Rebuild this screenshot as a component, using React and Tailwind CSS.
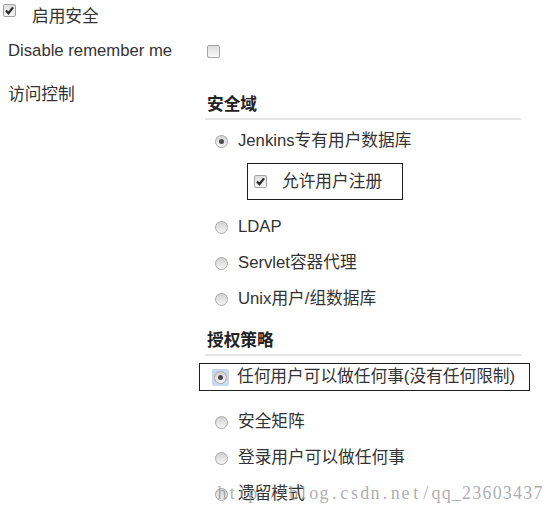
import React from 'react'

const font = "font-['Liberation_Sans','Noto_Sans_CJK_SC',sans-serif]"

function Checkbox({ checked }) {
    return (
        <span className="flex h-[13px] w-[13px] shrink-0 items-center justify-center rounded-[2px] border border-[#a3a3a3] bg-linear-to-b from-[#dedede] to-[#f7f7f7]">
            {checked && (
                <svg width="9" height="9" viewBox="0 0 9 9">
                    <path d="M1 4.6 L3.4 7.2 L8 1.4" fill="none" stroke="#2a2a2a" strokeWidth="2.2" />
                </svg>
            )}
        </span>
    )
}

function Radio({ checked }) {
    return (
        <span className="flex h-[13px] w-[13px] shrink-0 items-center justify-center rounded-full border border-[#a8a8a8] bg-linear-to-b from-[#d2d2d2] to-[#f5f5f5]">
            {checked && <span className="h-[5px] w-[5px] rounded-full bg-[#4a4a4a]" />}
        </span>
    )
}

function RadioRow({ label, checked }) {
    return (
        <div className="flex h-[36px] items-center pl-[16px]">
            <Radio checked={checked} />
            <span className="ml-[10px] leading-[20px]">{label}</span>
        </div>
    )
}

function Header({ title, top }) {
    return (
        <div className={`${top} ml-[6px] mr-[10px] border-b-2 border-[#e6e6e6] pb-[3px] pl-[2px] text-[16.7px] font-bold leading-[20px] text-[#222]`}>
            {title}
        </div>
    )
}

const watermark = 'http://blog.csdn.net/qq_23603437'

export default function App() {
    return (
        <div className={`${font} relative h-[512px] w-[560px] overflow-hidden bg-white text-[16.7px] text-[#333]`}>
            <div className="flex h-[33px] items-start">
                <span className="ml-[3px] mt-[4px]">
                    <Checkbox checked />
                </span>
                <span className="ml-[16px] mt-[7px] leading-[20px]">启用安全</span>
            </div>

            <div className="flex h-[36px] items-center">
                <span className="w-[199px] pl-[8px] leading-[20px]">Disable remember me</span>
                <span className="ml-[8px]">
                    <Checkbox />
                </span>
            </div>

            <div className="flex">
                <span className="mt-[16px] w-[199px] shrink-0 pl-[8px] leading-[20px]">访问控制</span>
                <div className="w-[332px]">
                    <Header title="安全域" top="pt-[26px]" />
                    <div className="mt-[3px]">
                        <RadioRow label="Jenkins专有用户数据库" checked />
                    </div>
                    <div className="ml-[48px] mt-[4px] flex h-[37px] w-[156px] items-center border-[1.5px] border-[#1e1e1e] pl-[6px]">
                        <Checkbox checked />
                        <span className="ml-[15px] leading-[20px]">允许用户注册</span>
                    </div>
                    <div className="mt-[9px]">
                        <RadioRow label="LDAP" />
                        <RadioRow label="Servlet容器代理" />
                        <RadioRow label="Unix用户/组数据库" />
                    </div>
                    <Header title="授权策略" top="pt-[14px]" />
                    <div className="mt-[7px] flex h-[28px] w-[331px] items-center border-[1.5px] border-[#1e1e1e] pl-[12px]">
                        <span className="rounded-[2px] bg-[#c9d8ef] p-[2px]">
                            <Radio checked />
                        </span>
                        <span className="ml-[8px] leading-[20px]">任何用户可以做任何事(没有任何限制)</span>
                    </div>
                    <div className="mt-[13px]">
                        <RadioRow label="安全矩阵" />
                        <RadioRow label="登录用户可以做任何事" />
                        <RadioRow label="遗留模式" />
                    </div>
                </div>
            </div>

            <div className="pointer-events-none absolute left-[217px] top-[482px] flex font-['Liberation_Serif',serif] text-[18px] leading-[22px] text-[#989898]/80">
                {watermark.split('').map((ch, i) => (
                    <span key={i} className="inline-block w-[10.2px] text-center">
                        {ch}
                    </span>
                ))}
            </div>
        </div>
    )
}
